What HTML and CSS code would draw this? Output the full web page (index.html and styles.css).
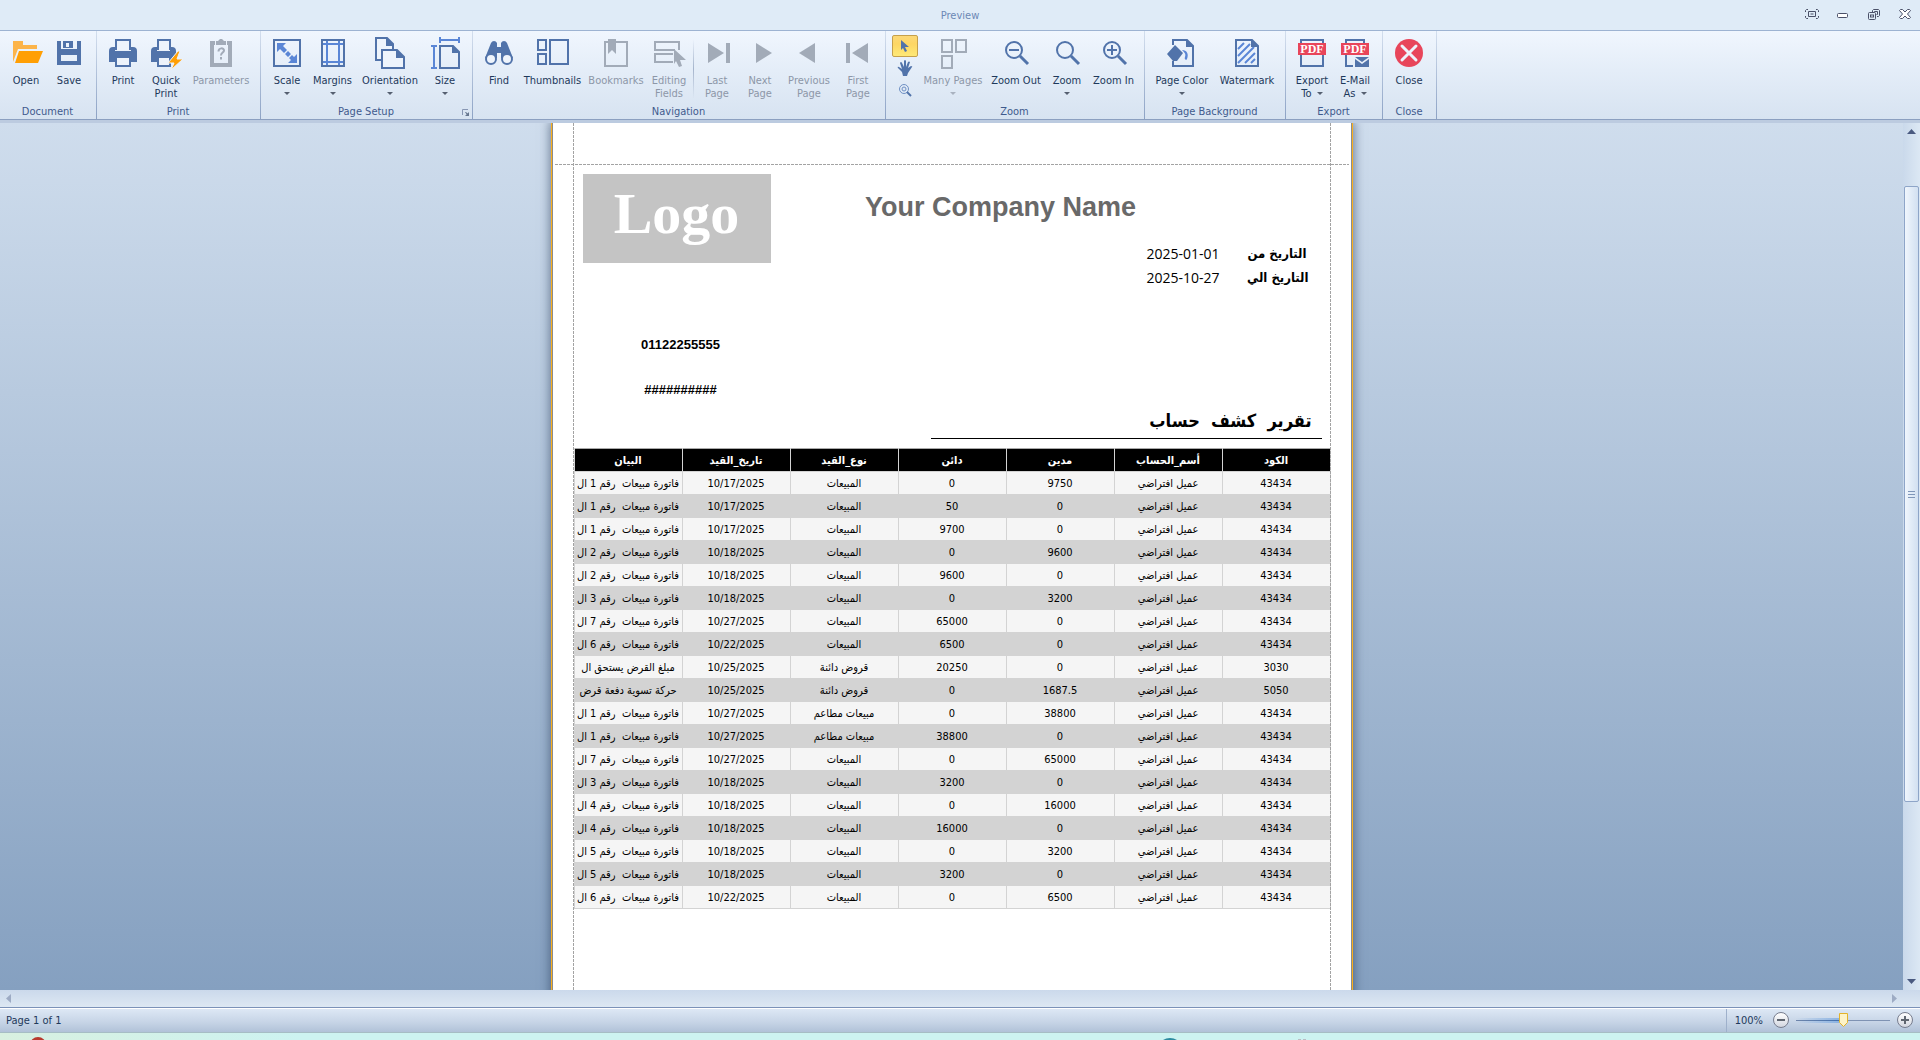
FILE: index.html
```
<!DOCTYPE html>
<html lang="en">
<head>
    <meta charset="UTF-8">
    <meta name="viewport" content="width=device-width, initial-scale=1.0">
    <title>Preview</title>
    <link rel="stylesheet" href="styles.css">
</head>
<body>
    <header class="titlebar">
        <span class="title">Preview</span>
        <div class="window-buttons">
            <button type="button" aria-label="Full screen"><svg width="14" height="10" viewBox="0 0 14 10" fill="none" stroke="#4a5068"><path d="M3 .5H1.500L.5 1.500V3M11 .5h1.500l1 1V3M3 9.500H1.500L.5 8.500V7M11 9.500h1.500l1-1V7M3.500 2.500h7v5h-7zM5.500 5h3"/></svg></button>
            <button type="button" aria-label="Minimize"><svg width="12" height="10" viewBox="0 0 12 10" fill="none" stroke="#4a5068"><rect x=".5" y="4.500" width="10" height="4" rx="1" fill="#fff"/></svg></button>
            <button type="button" aria-label="Restore"><svg width="12" height="12" viewBox="0 0 12 12" fill="none" stroke="#4a5068"><path d="M4.500 3V1.500l1-1h5l1 1v5l-1 1H9M6.500 3.500v-1h3v3h-1"/><rect x=".5" y="3.500" width="7" height="7" rx="1"/><rect x="2.500" y="6" width="3" height="2"/></svg></button>
            <button type="button" aria-label="Close window"><svg width="12" height="10" viewBox="0 0 12 10" fill="#fff" stroke="#4a5068"><path d="M.5 1.500l1-1h2L6 3 8.500.5h2l1 1-3 3.500 3 3.500-1 1h-2L6 7 3.500 9.500h-2l-1-1 3-3.500z"/></svg></button>
        </div>
    </header>

    <nav class="ribbon">
        <section class="group">
            <div class="tools">
                <button type="button" class="tool"><svg class="icon" viewBox="0 0 32 32"><path fill="#fcb44a" d="M3 4h10v4h14v4H8L3 25z"/><path fill="#ff9f05" d="M9 14h24l-5 12H5z"/></svg>Open</button>
                <button type="button" class="tool"><svg class="icon" viewBox="0 0 32 32" fill="#5173aa" fill-rule="evenodd"><path d="M4 4h4v8h16V4h4v24H4zM8 18v6h16v-6zM10 4h10v7H10zM13 6v4h3V6z"/></svg>Save</button>
            </div>
            <h2>Document</h2>
        </section>
        <section class="group">
            <div class="tools">
                <button type="button" class="tool"><svg class="icon" viewBox="0 0 32 32"><path fill="#5173aa" d="M2 14q0-4 4-4h2v4h16v-4h2q4 0 4 4v11H2z"/><path fill="#edf3fb" d="M6 21h20v5H6z"/><path fill="#5173aa" d="M2 19h6v6H2zM24 19h6v6h-6z"/><path fill="#edf3fb" stroke="#5173aa" stroke-width="2" d="M9 13V3h14v10M9 20h14v9H9z"/></svg>Print</button>
                <button type="button" class="tool"><svg class="icon" viewBox="0 0 32 32"><path fill="#5173aa" d="M1 14q0-4 4-4h2v4h13v-4h2q4 0 4 4v11H1z"/><path fill="#edf3fb" stroke="#5173aa" stroke-width="2" d="M8 13V3h12v10M8 20h12v9H8z"/><path fill="#ff9f05" stroke="#edf3fb" stroke-width="1" d="M28 14L18 26h6l-3 7L33 22h-6l3-8z"/></svg>Quick<br>Print</button>
                <button type="button" class="tool parameters" disabled><svg class="icon" viewBox="0 0 32 32"><path fill="#a2abb8" fill-rule="evenodd" d="M5 4h5v4h12V4h5v26H5zM9 8v18h14V8zM11 4h2l2-2h2l2 2h2v4H11z"/><path fill="none" stroke="#a2abb8" stroke-width="2" d="M13.500 14.500c0-4 5.500-4 5.500-1 0 2-3 2.200-3 5M16 20v2.500"/></svg>Parameters</button>
            </div>
            <h2>Print</h2>
        </section>
        <section class="group">
            <div class="tools">
                <button type="button" class="tool"><svg class="icon" viewBox="0 0 32 32"><rect x="3" y="3" width="26" height="26" fill="none" stroke="#5173aa" stroke-width="2"/><path fill="#5a86d6" d="M6 6h9l-3 3 4 4-3 3-4-4-3 3zM26 26h-9l3-3-2-2 3-3 2 2 3-3zM17 14l3 3-3 3-3-3z"/></svg>Scale<span class="caret"></span></button>
                <button type="button" class="tool margins"><svg class="icon" viewBox="0 0 32 32" fill="none" stroke-width="2"><path stroke="#5a86d6" d="M4 7h24M4 25h24M10 3v26M22 3v26"/><path stroke="#5173aa" d="M5 3h22v26H5z"/></svg>Margins<span class="caret"></span></button>
                <button type="button" class="tool orientation"><svg class="icon" viewBox="0 0 32 32" fill="#eef4fc" stroke="#5173aa" stroke-width="2"><path d="M2 1h11l6 6v16H2z"/><path fill="#5173aa" d="M13 1v7h7"/><path d="M8 13h15l7 7v11H8z"/><path fill="#5173aa" d="M23 13v7h7"/></svg>Orientation<span class="caret"></span></button>
                <button type="button" class="tool"><svg class="icon" viewBox="0 0 32 32" fill="none" stroke-width="2"><path stroke="#5a86d6" d="M11 3h19M11 0v6M30 0v6M5 9v22M2 9h6M2 31h6"/><path stroke="#5173aa" d="M11 9h13l6 6v16H11z"/><path fill="#5173aa" stroke="#5173aa" d="M24 9v6h6"/></svg>Size<span class="caret"></span></button>
            </div>
            <h2>Page Setup</h2>
            <button type="button" class="launcher" aria-label="Page setup options"><svg width="7" height="7" viewBox="0 0 7 7"><path fill="none" stroke="#8796b3" d="M.5 6V.5H6"/><path fill="#66768f" d="M7 3v4H3zM3 3h1l2 2-1 1z"/></svg></button>
        </section>
        <section class="group">
            <div class="tools">
                <button type="button" class="tool"><svg class="icon" viewBox="0 0 32 32" fill="#5173aa"><path d="M8 6q1-2 3-2t3 2v4h4V6q1-2 3-2t3 2l6 15H18v-5h-4v5H2z"/><circle cx="8" cy="22" r="5" fill="#eef4fc" stroke="#5173aa" stroke-width="2"/><circle cx="24" cy="22" r="5" fill="#eef4fc" stroke="#5173aa" stroke-width="2"/></svg>Find</button>
                <button type="button" class="tool thumbnails"><svg class="icon" viewBox="0 0 32 32" fill="none" stroke="#5173aa" stroke-width="2"><path d="M1 3h8v10H1zM1 17h8v10H1zM13 3h18v24H13z"/></svg>Thumbnails</button>
                <button type="button" class="tool bookmarks" disabled><svg class="icon" viewBox="0 0 32 32"><path fill="none" stroke="#a2abb8" stroke-width="2" d="M5 5h22v24H5z"/><path fill="#a2abb8" d="M8 2h8v15l-4-4-4 4z"/></svg>Bookmarks</button>
                <button type="button" class="tool" disabled><svg class="icon" viewBox="0 0 32 32"><path fill="none" stroke="#a2abb8" stroke-width="2" d="M26 13V5H2v8h20M20 17H2v8h18"/><path fill="#a2abb8" d="M21 12l12 11h-6l2 6-3 1-3-6-2 3z"/></svg>Editing<br>Fields</button>
                <span class="separator"></span>
                <button type="button" class="tool" disabled><svg class="icon" viewBox="0 0 32 32" fill="#a2abb8"><path d="M7 6l16 10L7 26zM25 6h4v20h-4z"/></svg>Last<br>Page</button>
                <button type="button" class="tool" disabled><svg class="icon" viewBox="0 0 32 32" fill="#a2abb8"><path d="M12 6l16 10-16 10z"/></svg>Next<br>Page</button>
                <button type="button" class="tool previous" disabled><svg class="icon" viewBox="0 0 32 32" fill="#a2abb8"><path d="M22 6v20L6 16z"/></svg>Previous<br>Page</button>
                <button type="button" class="tool" disabled><svg class="icon" viewBox="0 0 32 32" fill="#a2abb8"><path d="M26 6v20L10 16zM4 6h4v20H4z"/></svg>First<br>Page</button>
            </div>
            <h2>Navigation</h2>
        </section>
        <section class="group">
            <div class="tools">
                <div class="pointer-tools">
                    <button type="button" class="active" aria-label="Pointer"><svg width="12" height="14" viewBox="0 0 12 14"><path fill="#5173aa" d="M2 1l8 7H6l2 4-2 1-2-4-2 2z"/></svg></button>
                    <button type="button" aria-label="Hand tool"><svg width="16" height="16" viewBox="0 0 16 16"><path fill="#5173aa" d="M5 12L1 8q-1-2 1-1l3 2-2-6q1-2 2 0l2 4V1q1-2 2 0v6l2-5q1-1 2 0l-2 6 3-2q2 0 1 1l-4 6-1 3H6z"/></svg></button>
                    <button type="button" aria-label="Magnifier"><svg width="14" height="14" viewBox="0 0 14 14" fill="none" stroke="#6f90c4"><circle cx="6" cy="6" r="4.500"/><circle cx="6" cy="6" r="2"/><path stroke="#5173aa" stroke-width="2" d="M9 9l4 4"/></svg></button>
                </div>
                <button type="button" class="tool many-pages" disabled><svg class="icon" viewBox="0 0 32 32" fill="none" stroke="#a2abb8" stroke-width="2"><path d="M5 3h10v12H5zM19 3h10v12H19zM5 19h10v12H5z"/></svg>Many Pages<span class="caret"></span></button>
                <button type="button" class="tool zoom-out"><svg class="icon" viewBox="0 0 32 32" fill="none" stroke="#5173aa" stroke-width="2"><circle cx="14" cy="13" r="8"/><path d="M9 13h10"/><path stroke-width="3" d="M20 19l8 8"/></svg>Zoom Out</button>
                <button type="button" class="tool"><svg class="icon" viewBox="0 0 32 32" fill="none" stroke="#5173aa" stroke-width="2"><circle cx="14" cy="13" r="8"/><path stroke-width="3" d="M20 19l8 8"/></svg>Zoom<span class="caret"></span></button>
                <button type="button" class="tool zoom-in"><svg class="icon" viewBox="0 0 32 32" fill="none" stroke="#5173aa" stroke-width="2"><circle cx="14" cy="13" r="8"/><path d="M9 13h10M14 8v10"/><path stroke-width="3" d="M20 19l8 8"/></svg>Zoom In</button>
            </div>
            <h2>Zoom</h2>
        </section>
        <section class="group">
            <div class="tools">
                <button type="button" class="tool page-color"><svg class="icon" viewBox="0 0 32 32"><path fill="none" stroke="#5173aa" stroke-width="2" d="M7 8V3h14l6 6v20H7v-5"/><path fill="#5173aa" d="M20 2v8h8zM9 8l8 8-6 8h-4l-6-7z"/><path fill="#5a86d6" d="M16 13c5 0 7 4 5 9-1 2-3 0-2-2 1-3 0-4-3-7z"/></svg>Page Color<span class="caret"></span></button>
                <button type="button" class="tool page-color"><svg class="icon" viewBox="0 0 32 32" fill="none"><path stroke="#5a86d6" stroke-width="2" d="M7 12l6-6M7 19L19 7M7 26L23 10M14 26l10-10M20 26l4-4"/><path stroke="#5173aa" stroke-width="2" d="M5 3h16l6 6v20H5z"/><path fill="#5173aa" d="M20 2v8h8z"/></svg>Watermark</button>
            </div>
            <h2>Page Background</h2>
        </section>
        <section class="group">
            <div class="tools">
                <button type="button" class="tool"><svg class="icon" viewBox="0 0 32 32"><path fill="none" stroke="#5173aa" stroke-width="2" d="M5 3h22v26H5z"/><path fill="#e8455a" d="M2 6h28v12H2z"/><text class="pdf" x="16" y="16">PDF</text></svg>Export<span class="line">To <span class="caret"></span></span></button>
                <button type="button" class="tool"><svg class="icon" viewBox="0 0 32 32"><path fill="none" stroke="#5173aa" stroke-width="2" d="M14 29H7V3h18v10"/><path fill="#e8455a" d="M2 6h28v12H2z"/><text class="pdf" x="16" y="16">PDF</text><path fill="#5173aa" d="M16 20h14l-7 5zM16 22l7 5 7-5v8H16z"/></svg>E-Mail<span class="line">As <span class="caret"></span></span></button>
            </div>
            <h2>Export</h2>
        </section>
        <section class="group">
            <div class="tools">
                <button type="button" class="tool"><svg class="icon" viewBox="0 0 32 32"><circle cx="16" cy="16" r="14" fill="#e8455a"/><path stroke="#edf3fb" stroke-width="3" stroke-linecap="round" d="M9 9l14 14M23 9L9 23"/></svg>Close</button>
            </div>
            <h2>Close</h2>
        </section>
    </nav>

    <main class="workspace">
        <div class="viewport">
            <article class="page">
                <div class="report">
                    <div class="report-header">
                        <div class="brand">
                            <div class="logo">Logo</div>
                            <p>01122255555</p>
                            <p>##########</p>
                        </div>
                        <div class="info">
                            <h1>Your Company Name</h1>
                            <dl class="dates" dir="rtl">
                                <dt>التاريخ من</dt>
                                <dd>2025-01-01</dd>
                                <dt>التاريخ الي</dt>
                                <dd>2025-10-27</dd>
                            </dl>
                        </div>
                    </div>
                    <h2 class="report-title" dir="rtl">تقرير&nbsp; كشف&nbsp; حساب</h2>
                    <table dir="rtl">
                        <thead>
                            <tr><th>الكود</th><th>أسم_الحساب</th><th>مدين</th><th>دائن</th><th>نوع_القيد</th><th>تاريخ_القيد</th><th>البيان</th></tr>
                        </thead>
                        <tbody>
                            <tr><td>43434</td><td>عميل افتراضي</td><td>9750</td><td>0</td><td>المبيعات</td><td>10/17/2025</td><td>فاتورة مبيعات&nbsp; رقم 1 ال</td></tr>
                            <tr><td>43434</td><td>عميل افتراضي</td><td>0</td><td>50</td><td>المبيعات</td><td>10/17/2025</td><td>فاتورة مبيعات&nbsp; رقم 1 ال</td></tr>
                            <tr><td>43434</td><td>عميل افتراضي</td><td>0</td><td>9700</td><td>المبيعات</td><td>10/17/2025</td><td>فاتورة مبيعات&nbsp; رقم 1 ال</td></tr>
                            <tr><td>43434</td><td>عميل افتراضي</td><td>9600</td><td>0</td><td>المبيعات</td><td>10/18/2025</td><td>فاتورة مبيعات&nbsp; رقم 2 ال</td></tr>
                            <tr><td>43434</td><td>عميل افتراضي</td><td>0</td><td>9600</td><td>المبيعات</td><td>10/18/2025</td><td>فاتورة مبيعات&nbsp; رقم 2 ال</td></tr>
                            <tr><td>43434</td><td>عميل افتراضي</td><td>3200</td><td>0</td><td>المبيعات</td><td>10/18/2025</td><td>فاتورة مبيعات&nbsp; رقم 3 ال</td></tr>
                            <tr><td>43434</td><td>عميل افتراضي</td><td>0</td><td>65000</td><td>المبيعات</td><td>10/27/2025</td><td>فاتورة مبيعات&nbsp; رقم 7 ال</td></tr>
                            <tr><td>43434</td><td>عميل افتراضي</td><td>0</td><td>6500</td><td>المبيعات</td><td>10/22/2025</td><td>فاتورة مبيعات&nbsp; رقم 6 ال</td></tr>
                            <tr><td>3030</td><td>عميل افتراضي</td><td>0</td><td>20250</td><td>قروض دائنة</td><td>10/25/2025</td><td>مبلغ القرض يستحق ال</td></tr>
                            <tr><td>5050</td><td>عميل افتراضي</td><td>1687.5</td><td>0</td><td>قروض دائنة</td><td>10/25/2025</td><td>حركة تسوية دفعة قرض</td></tr>
                            <tr><td>43434</td><td>عميل افتراضي</td><td>38800</td><td>0</td><td>مبيعات مطاعم</td><td>10/27/2025</td><td>فاتورة مبيعات&nbsp; رقم 1 ال</td></tr>
                            <tr><td>43434</td><td>عميل افتراضي</td><td>0</td><td>38800</td><td>مبيعات مطاعم</td><td>10/27/2025</td><td>فاتورة مبيعات&nbsp; رقم 1 ال</td></tr>
                            <tr><td>43434</td><td>عميل افتراضي</td><td>65000</td><td>0</td><td>المبيعات</td><td>10/27/2025</td><td>فاتورة مبيعات&nbsp; رقم 7 ال</td></tr>
                            <tr><td>43434</td><td>عميل افتراضي</td><td>0</td><td>3200</td><td>المبيعات</td><td>10/18/2025</td><td>فاتورة مبيعات&nbsp; رقم 3 ال</td></tr>
                            <tr><td>43434</td><td>عميل افتراضي</td><td>16000</td><td>0</td><td>المبيعات</td><td>10/18/2025</td><td>فاتورة مبيعات&nbsp; رقم 4 ال</td></tr>
                            <tr><td>43434</td><td>عميل افتراضي</td><td>0</td><td>16000</td><td>المبيعات</td><td>10/18/2025</td><td>فاتورة مبيعات&nbsp; رقم 4 ال</td></tr>
                            <tr><td>43434</td><td>عميل افتراضي</td><td>3200</td><td>0</td><td>المبيعات</td><td>10/18/2025</td><td>فاتورة مبيعات&nbsp; رقم 5 ال</td></tr>
                            <tr><td>43434</td><td>عميل افتراضي</td><td>0</td><td>3200</td><td>المبيعات</td><td>10/18/2025</td><td>فاتورة مبيعات&nbsp; رقم 5 ال</td></tr>
                            <tr><td>43434</td><td>عميل افتراضي</td><td>6500</td><td>0</td><td>المبيعات</td><td>10/22/2025</td><td>فاتورة مبيعات&nbsp; رقم 6 ال</td></tr>
                        </tbody>
                    </table>
                </div>
            </article>
        </div>
        <div class="vscroll">
            <svg width="9" height="5" viewBox="0 0 9 5"><path fill="#4a5a80" d="M0 5l4.500-5L9 5z"/></svg>
            <div class="vthumb"><span class="grip"></span></div>
            <svg width="9" height="5" viewBox="0 0 9 5"><path fill="#4a5a80" d="M0 0h9L4.500 5z"/></svg>
        </div>
    </main>

    <div class="hscroll">
        <svg width="5" height="9" viewBox="0 0 5 9"><path fill="#9dabc4" d="M5 0v9L0 4.500z"/></svg>
        <svg width="5" height="9" viewBox="0 0 5 9"><path fill="#9dabc4" d="M0 0l5 4.500L0 9z"/></svg>
    </div>

    <footer class="statusbar">
        <span>Page 1 of 1</span>
        <div class="zoombar">
            <label for="zoom">100%</label>
            <button type="button" class="round" aria-label="Zoom out"><svg width="8" height="8" viewBox="0 0 8 8"><path fill="#5f6670" d="M0 3h8v2H0z"/></svg></button>
            <input type="range" id="zoom" min="0" max="100" value="50">
            <button type="button" class="round" aria-label="Zoom in"><svg width="8" height="8" viewBox="0 0 8 8"><path fill="#5f6670" d="M0 3h3V0h2v3h3v2H5v3H3V5H0z"/></svg></button>
        </div>
    </footer>

    <div class="desktop-edge">
        <svg width="100%" height="7"><circle cx="38" cy="12" r="8" fill="#b93a2e"/><circle cx="1170" cy="18" r="13" fill="#2c8ba0"/><path stroke="#b9bcc4" stroke-width="2" d="M1298 7h3M1303 7h3"/></svg>
    </div>
</body>
</html>
```
FILE: styles.css
```
* {
    box-sizing: border-box;
}

body {
    display: flex;
    flex-direction: column;
    height: 100vh;
    margin: 0;
    overflow: hidden;
    font-family: "DejaVu Sans Condensed", "DejaVu Sans", sans-serif;
    font-size: 11px;
    line-height: 13px;
    color: #1e395b;
}

button {
    padding: 0;
    border: none;
    background: none;
    color: inherit;
    font: inherit;
}

h1, h2, p, dl, dd {
    margin: 0;
}

/* title bar */
.titlebar {
    display: grid;
    grid-template-columns: 1fr auto 1fr;
    align-items: center;
    height: 30px;
    background-color: #dfebf7;
    color: #6c88b5;
}

.title {
    grid-column: 2;
}

.window-buttons {
    display: flex;
    justify-content: flex-end;
}

.window-buttons button {
    display: flex;
    justify-content: center;
    width: 31px;
}

/* ribbon */
.ribbon {
    display: flex;
    height: 90px;
    border-top: 1px solid #9db3d2;
    border-bottom: 1px solid #8b9fc0;
    background: linear-gradient(#f0f6fe, #e4edf8 45%, #d7e3f1);
}

.group {
    position: relative;
    display: flex;
    flex-direction: column;
    justify-content: space-between;
    padding: 0 6px 1px 5px;
    border-right: 1px solid;
    border-image: linear-gradient(#d4dfee, #8ba1c4) 1;
}

.group h2 {
    font-size: 11px;
    font-weight: normal;
    text-align: center;
    color: #3f5a8d;
}

.tools {
    display: flex;
    gap: 1px;
}

.tool {
    display: flex;
    flex-direction: column;
    align-items: center;
    width: 42px;
    padding-top: 6px;
    text-align: center;
    white-space: nowrap;
}

.tool:disabled {
    color: #8d97a8;
}

.margins {
    width: 47px;
}

.zoom-in {
    width: 49px;
}

.previous {
    width: 54px;
}

.zoom-out {
    width: 58px;
}

.bookmarks {
    width: 62px;
}

.thumbnails {
    width: 63px;
}

.page-color {
    width: 64px;
}

.parameters, .orientation, .many-pages {
    width: 66px;
}

.icon {
    width: 32px;
    height: 32px;
    margin-bottom: 5px;
    overflow: visible;
}

.pdf {
    fill: #fff;
    font-family: "Liberation Serif", serif;
    font-size: 12px;
    font-weight: bold;
    text-anchor: middle;
}

.caret {
    display: inline-block;
    margin-top: 5px;
    border: 3px solid transparent;
    border-top-color: #555f70;
    border-bottom: none;
}

.tool:disabled .caret {
    border-top-color: #a9b2c0;
}

.line .caret {
    margin: 0 0 2px 2px;
}

.separator {
    width: 4px;
    height: 60px;
    margin-top: 8px;
    background: linear-gradient(transparent, #a5b4cc 50%, transparent) center / 1px 100% no-repeat;
}

.launcher {
    position: absolute;
    right: 3px;
    bottom: 3px;
    display: flex;
}

.pointer-tools {
    display: flex;
    flex-direction: column;
    width: 28px;
    padding: 4px 1px 0;
}

.pointer-tools button {
    display: flex;
    align-items: center;
    justify-content: center;
    height: 22px;
}

.pointer-tools .active {
    border: 1px solid #c5a04c;
    border-radius: 2px;
    background: linear-gradient(#fcd877, #fdd664 40%, #fee977);
}

/* preview area */
.workspace {
    display: flex;
    flex: 1;
    min-height: 0;
    border-top: 3px solid #bccbe0;
}

.viewport {
    flex: 1;
    overflow: hidden;
    background: linear-gradient(#cfdded, #85a0c0);
}

.page {
    position: relative;
    width: 800px;
    min-height: 1100px;
    margin: 0 auto;
    border: solid #8c8c8c;
    border-width: 0 1px;
    background-color: #fff;
    box-shadow: 0 0 0 1px #fbb01c, 0 0 10px 2px rgba(40, 60, 90, 0.6);
}

/* printable area guides */
.page::before {
    content: "";
    position: absolute;
    top: 41px;
    left: 2px;
    right: 2px;
    height: 1px;
    background: repeating-linear-gradient(to right, #a3a3a3 0 3px, transparent 3px 4px);
}

.page::after {
    content: "";
    position: absolute;
    top: 0;
    bottom: 0;
    left: 20px;
    right: 20px;
    background:
        repeating-linear-gradient(#a3a3a3 0 3px, transparent 3px 4px) left / 1px 100% no-repeat,
        repeating-linear-gradient(#a3a3a3 0 3px, transparent 3px 4px) right / 1px 100% no-repeat;
}

.report {
    padding: 51px 20px 0 21px;
    color: #000;
}

.report-header {
    display: flex;
}

.brand {
    width: 197px;
    padding-left: 9px;
    font-family: "Liberation Sans", Arial, sans-serif;
    font-size: 13px;
    font-weight: bold;
    line-height: 16px;
    text-align: center;
}

.logo {
    height: 89px;
    margin-bottom: 74px;
    background-color: #c4c4c4;
    color: #fff;
    font-family: "Liberation Serif", serif;
    font-size: 58px;
    line-height: 80px;
}

.brand p {
    padding-left: 8px;
}

.brand p + p {
    margin-top: 29px;
}

.info {
    flex: 1;
    padding: 17px 22px 0 0;
}

.info h1 {
    padding-right: 78px;
    color: #696969;
    font-family: "Liberation Sans", Arial, sans-serif;
    font-size: 27px;
    line-height: 32px;
    text-align: center;
}

.dates {
    display: grid;
    grid-template-columns: 61px auto;
    justify-content: start;
    column-gap: 28px;
    margin-top: 19px;
    font-size: 13px;
    line-height: 24px;
}

.dates dt {
    font-weight: bold;
    text-align: left;
    white-space: nowrap;
}

.dates dd {
    font-family: "Open Sans", sans-serif;
    font-size: 14px;
}

.report-title {
    width: 391px;
    margin: 5px 9px 9px auto;
    padding-right: 10px;
    border-bottom: 1px solid #000;
    font-size: 18px;
    font-weight: bold;
    line-height: 35px;
}

table {
    width: 100%;
    table-layout: fixed;
    border-collapse: collapse;
}

th, td {
    height: 23px;
    padding: 0;
    border: 1px solid #d3d3d3;
    overflow: hidden;
    text-align: center;
    white-space: nowrap;
}

th {
    border-top-color: #a9a9a9;
    background-color: #000;
    color: #fff;
}

td {
    background-color: #f5f5f5;
}

tbody tr:nth-child(even) td {
    background-color: #d3d3d3;
}

/* scroll bars */
.vscroll {
    display: flex;
    flex-direction: column;
    align-items: center;
    width: 17px;
    padding: 6px 0;
    background: linear-gradient(to right, #cad9eb, #dce8f4);
}

.vthumb {
    display: flex;
    align-items: center;
    justify-content: center;
    width: 15px;
    height: 616px;
    margin: 52px 0 auto;
    border: 1px solid #8ea5c8;
    border-radius: 2px;
    background: linear-gradient(to right, #f0f6fd, #d2e0f1);
}

.grip {
    width: 7px;
    height: 7px;
    background: repeating-linear-gradient(#7f96b9 0 1px, transparent 1px 3px);
}

.hscroll {
    display: flex;
    align-items: center;
    justify-content: space-between;
    height: 17px;
    padding: 0 23px 0 6px;
    background: linear-gradient(#cbd9eb, #dde8f3);
}

/* status bar */
.statusbar {
    display: flex;
    align-items: center;
    justify-content: space-between;
    height: 26px;
    padding: 0 7px 0 6px;
    border-top: 1px solid #7b92b8;
    border-bottom: 1px solid #a6bdc4;
    background: linear-gradient(#fff 0 1px, #dde8f5 1px, #c6d4e6 60%, #b1c2d8);
}

.zoombar {
    display: flex;
    align-items: center;
}

.zoombar label {
    padding: 5px 10px 5px 8px;
    border-left: 1px solid #9eb0cb;
}

.round {
    display: flex;
    align-items: center;
    justify-content: center;
    width: 16px;
    height: 16px;
    border: 1px solid #777d8e;
    border-radius: 50%;
    background: linear-gradient(#fff, #d3d7e0);
}

.zoombar input {
    width: 94px;
    height: 16px;
    margin: 0 7px;
    appearance: none;
    background:
        linear-gradient(to right, #6f86ab, #3f6fb0) left / 50% 1px no-repeat,
        linear-gradient(to right, transparent, #86b0e2) left / 50% 5px no-repeat,
        linear-gradient(#7f93b3, #7f93b3) right / 50% 1px no-repeat;
}

.zoombar input::-webkit-slider-thumb {
    appearance: none;
    width: 9px;
    height: 14px;
    background: url("data:image/svg+xml,%3Csvg xmlns='http://www.w3.org/2000/svg' width='9' height='14'%3E%3Cpath d='M.5.5h8v9l-4 4-4-4z' fill='%23fdf3c8' stroke='%23e3b32b'/%3E%3C/svg%3E");
}

/* strip of the desktop below the window */
.desktop-edge {
    height: 7px;
    background: linear-gradient(to right, #d8f0e0, #cdf3f1 300px);
}

.desktop-edge svg {
    display: block;
}
```
